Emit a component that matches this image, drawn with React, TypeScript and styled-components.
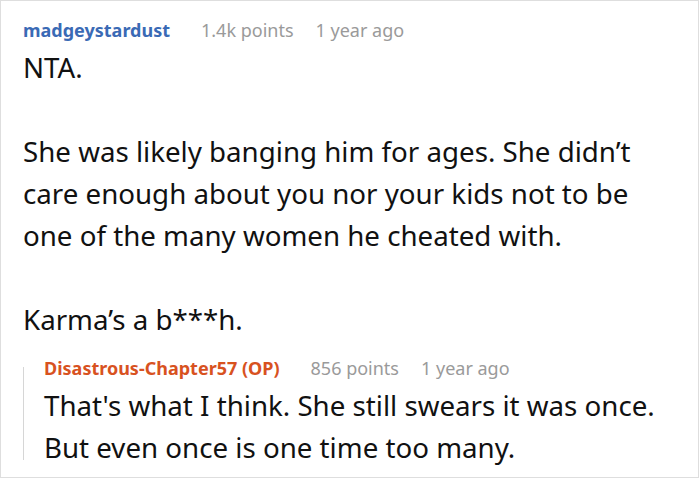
import styled, { createGlobalStyle } from "styled-components";

const GlobalStyle = createGlobalStyle`
  html, body {
    margin: 0;
    padding: 0;
    background: #ffffff;
  }
  body {
    font-family: "Noto Sans", "Open Sans", sans-serif;
    color: #111111;
  }
`;

type Comment = {
  author: string;
  isOp?: boolean;
  points: string;
  time: string;
  paragraphs: string[];
};

const parent: Comment = {
  author: "madgeystardust",
  points: "1.4k points",
  time: "1 year ago",
  paragraphs: [
    "NTA.",
    "She was likely banging him for ages. She didn\u2019t care enough about you nor your kids not to be one of the many women he cheated with.",
    "Karma\u2019s a b***h.",
  ],
};

const reply: Comment = {
  author: "Disastrous-Chapter57 (OP)",
  isOp: true,
  points: "856 points",
  time: "1 year ago",
  paragraphs: [
    "That's what I think. She still swears it was once. But even once is one time too many.",
  ],
};

const CommentHeader = ({ comment }: { comment: Comment }) => (
  <Header>
    <Author $op={comment.isOp}>{comment.author}</Author>
    <Points>{comment.points}</Points>
    <Time>{comment.time}</Time>
  </Header>
);

export default function App() {
  return (
    <>
      <GlobalStyle />
      <Frame>
        <CommentHeader comment={parent} />
        <Body>
          {parent.paragraphs.map((p) => (
            <Paragraph key={p}>{p}</Paragraph>
          ))}
        </Body>
        <Reply>
          <CommentHeader comment={reply} />
          <Body>
            {reply.paragraphs.map((p) => (
              <Paragraph key={p}>{p}</Paragraph>
            ))}
          </Body>
        </Reply>
      </Frame>
    </>
  );
}

const Frame = styled.div`
  box-sizing: border-box;
  width: 699px;
  height: 478px;
  border: 1px solid #dedede;
  padding: 17px 0 0 22px;
  overflow: hidden;
`;

const Header = styled.div`
  display: flex;
  align-items: baseline;
  height: 24px;
  line-height: 24px;
  font-size: 18px;
  margin-bottom: 4px;
`;

const Author = styled.span<{ $op?: boolean }>`
  font-weight: 700;
  color: ${({ $op }) => ($op ? "#d8521f" : "#3a6ab5")};
  margin-right: 31px;
`;

const Points = styled.span`
  color: #9a9a9a;
  margin-right: 22px;
`;

const Time = styled.span`
  color: #9a9a9a;
`;

const Body = styled.div`
  display: flex;
  flex-direction: column;
  gap: 42px;
  font-size: 27.7px;
  line-height: 42px;
  width: 640px;
`;

const Paragraph = styled.p`
  margin: 0;
`;

const Reply = styled.div`
  position: relative;
  margin-top: 16px;
  padding-left: 21px;

  &::before {
    content: "";
    position: absolute;
    left: 0;
    top: 11px;
    bottom: 8px;
    width: 1px;
    background: #d6d6d6;
  }
`;
